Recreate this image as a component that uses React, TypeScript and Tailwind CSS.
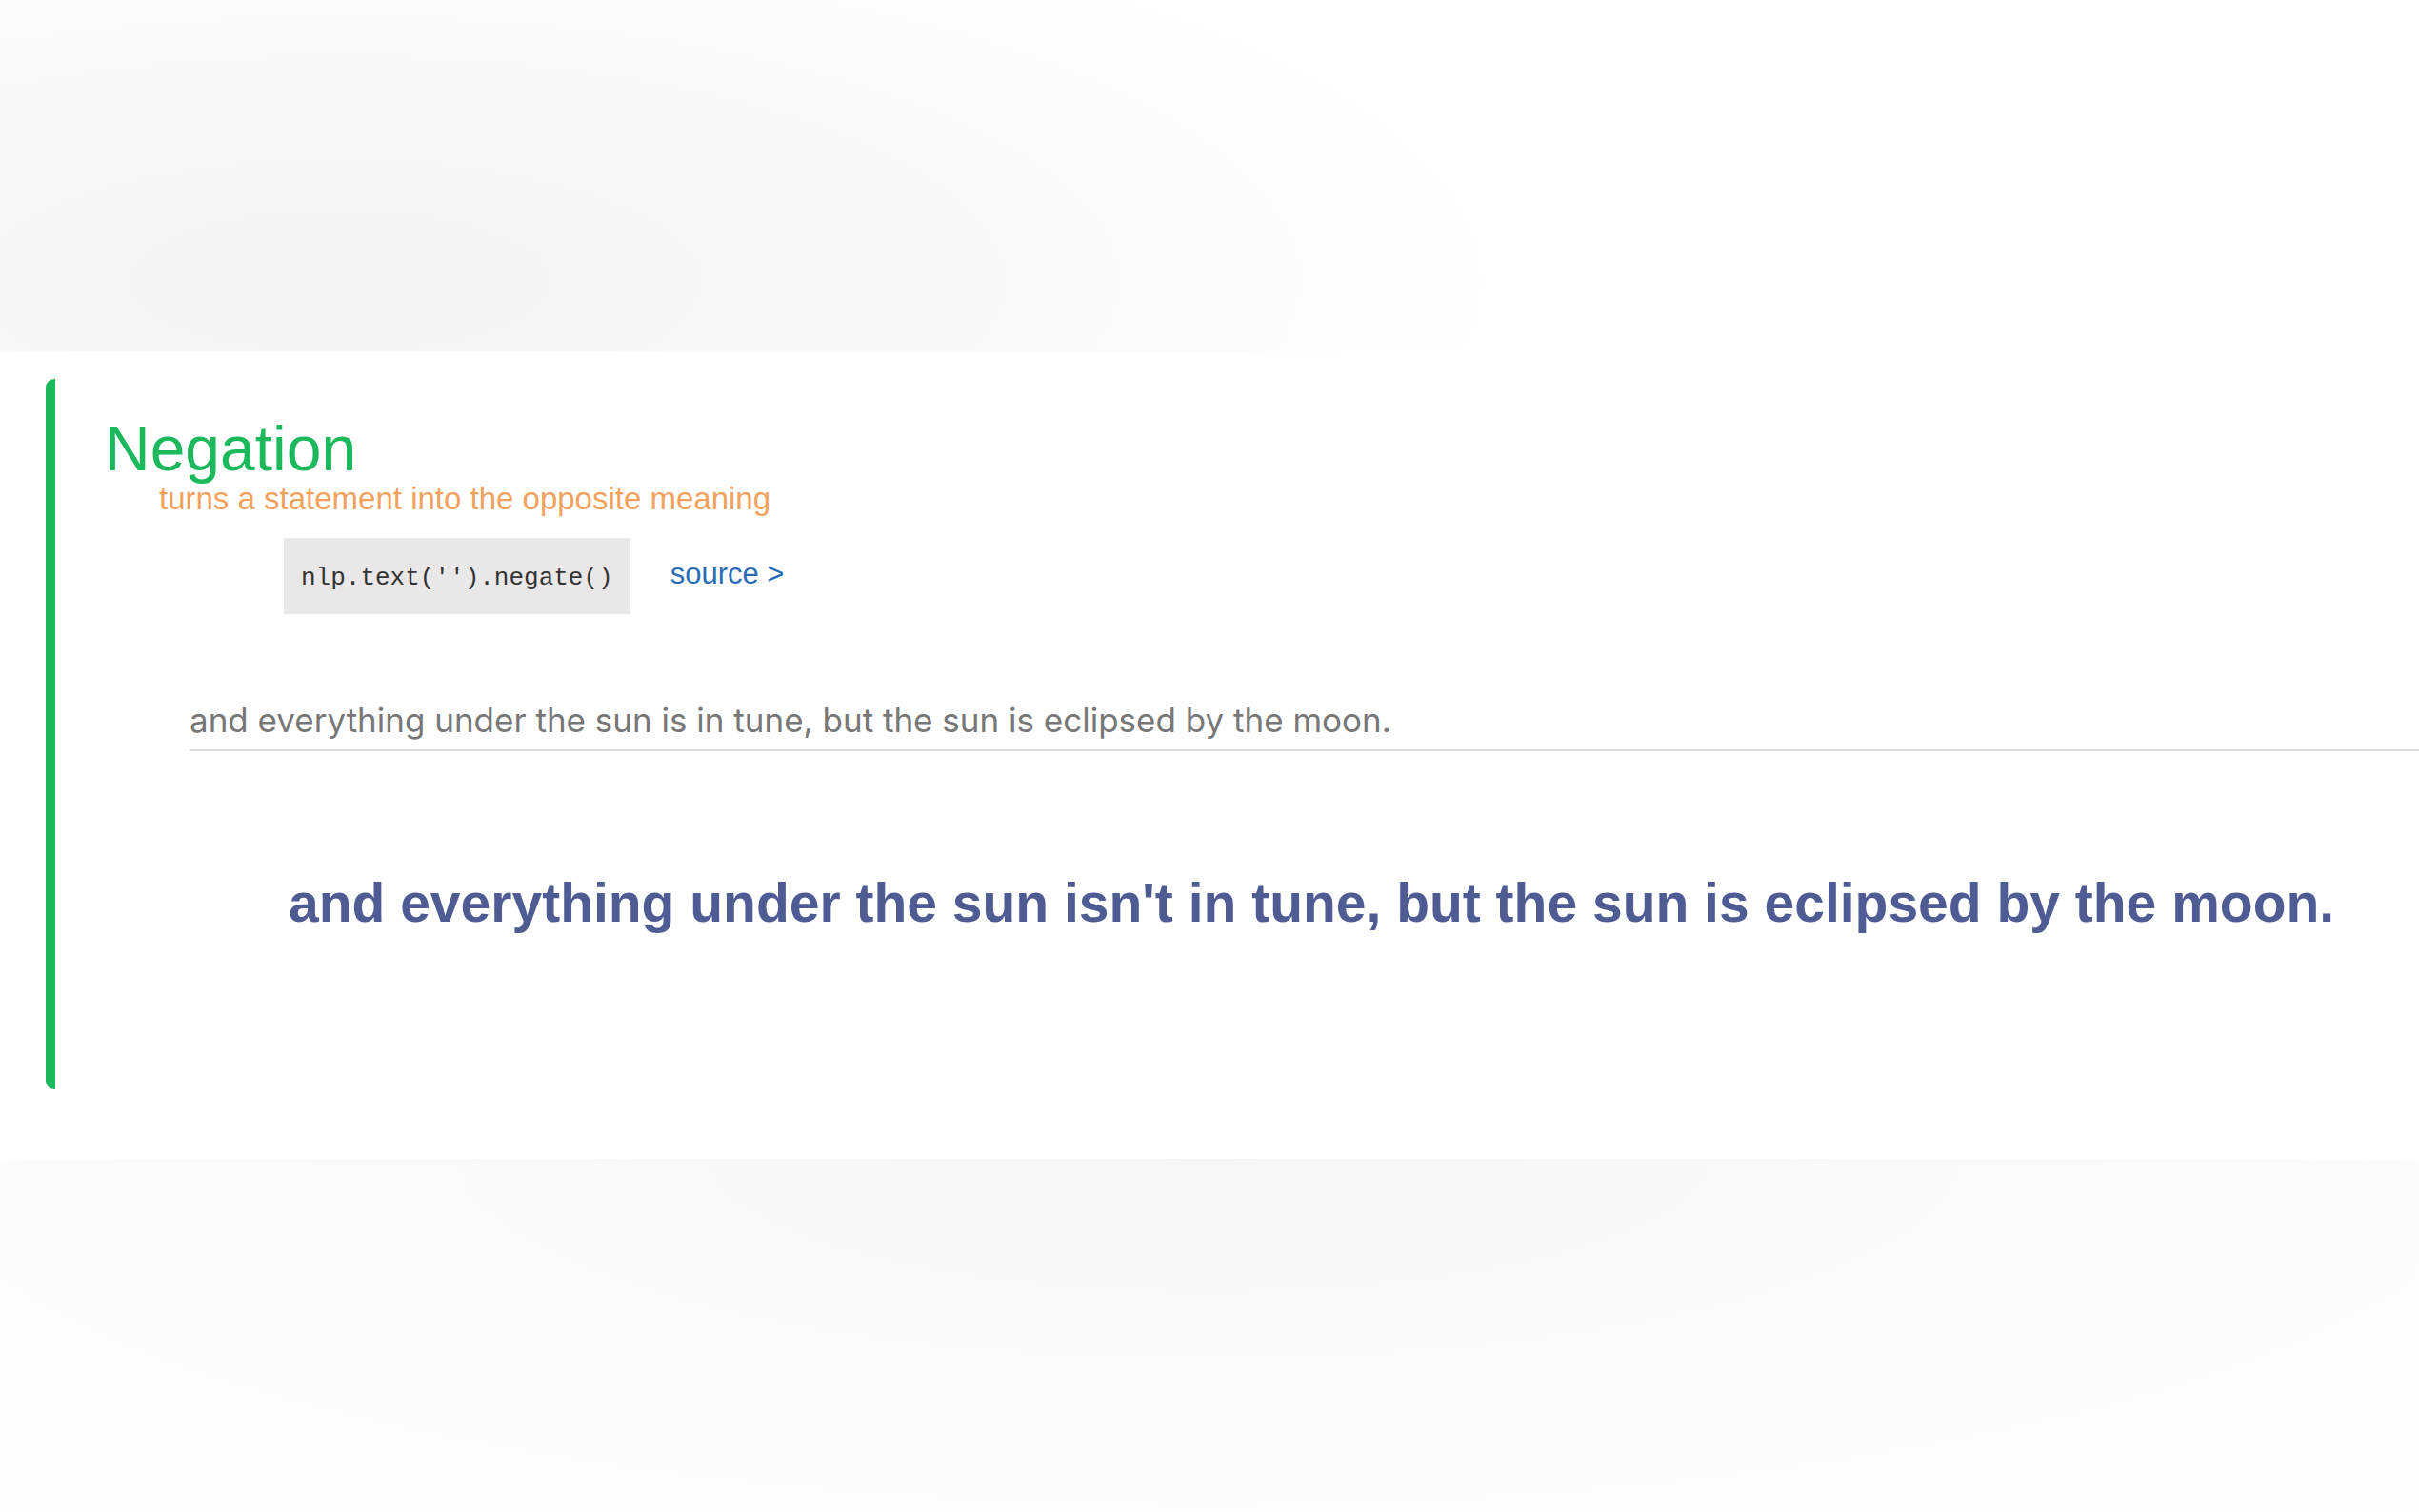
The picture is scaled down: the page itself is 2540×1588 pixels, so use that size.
const inputText = 'and everything under the sun is in tune, but the sun is eclipsed by the moon.';
const outputText = "and everything under the sun isn't in tune, but the sun is eclipsed by the moon.";

const App = () => {
    return (
        <div className="flex min-h-[1588px] w-full flex-col overflow-hidden bg-white font-['Liberation_Sans',Arial,sans-serif]">
            {/* faint backdrop above the demo card */}
            <div className="h-[369px] w-full bg-[radial-gradient(ellipse_60%_140%_at_14%_80%,#f4f3f2_0%,#f9f9f8_50%,#ffffff_80%)]"></div>

            {/* Demo card */}
            <section className="bg-white pl-[48px] pt-[29px] pb-[73px]" aria-label="Negation">
                <div className="flex h-[746px] flex-col rounded-l-[9px] border-l-[10px] border-[#1cb85c] pt-[40px]">
                    <h2 className="pl-[52px] text-[66px] leading-[66px] text-[#1cb85c]">Negation</h2>
                    <p className="mt-[3px] pl-[109px] text-[33px] leading-[33px] text-[#f3a25e]">
                        turns a statement into the opposite meaning
                    </p>

                    <div className="mt-[25px] flex items-center gap-[42px] pl-[240px]">
                        <code className="flex h-[80px] items-center bg-[#e9e7e7] px-[18px] pt-[3px] font-['Liberation_Mono',monospace] text-[26px] leading-[26px] text-[#333]">
                            nlp.text('').negate()
                        </code>
                        <a href="#" className="-mt-[5px] text-[31px] leading-[31px] text-[#2b6db5]">
                            source &gt;
                        </a>
                    </div>

                    <div className="ml-[141px] mt-[94px] border-b-2 border-[#dddddd] pb-[13px] font-['Inter',sans-serif] text-[35px] leading-[35px] text-[#777]">
                        {inputText}
                    </div>

                    <p className="ml-[245px] mt-[131px] text-[57px] font-bold leading-[57px] whitespace-nowrap text-[#4f5b93]">
                        {outputText}
                    </p>
                </div>
            </section>

            {/* faint backdrop below */}
            <div className="h-[371px] w-full bg-[radial-gradient(ellipse_60%_110%_at_50%_0%,#f6f6f6_0%,#fafafa_55%,#fdfdfd_100%)]"></div>
        </div>
    );
};

export default App;
